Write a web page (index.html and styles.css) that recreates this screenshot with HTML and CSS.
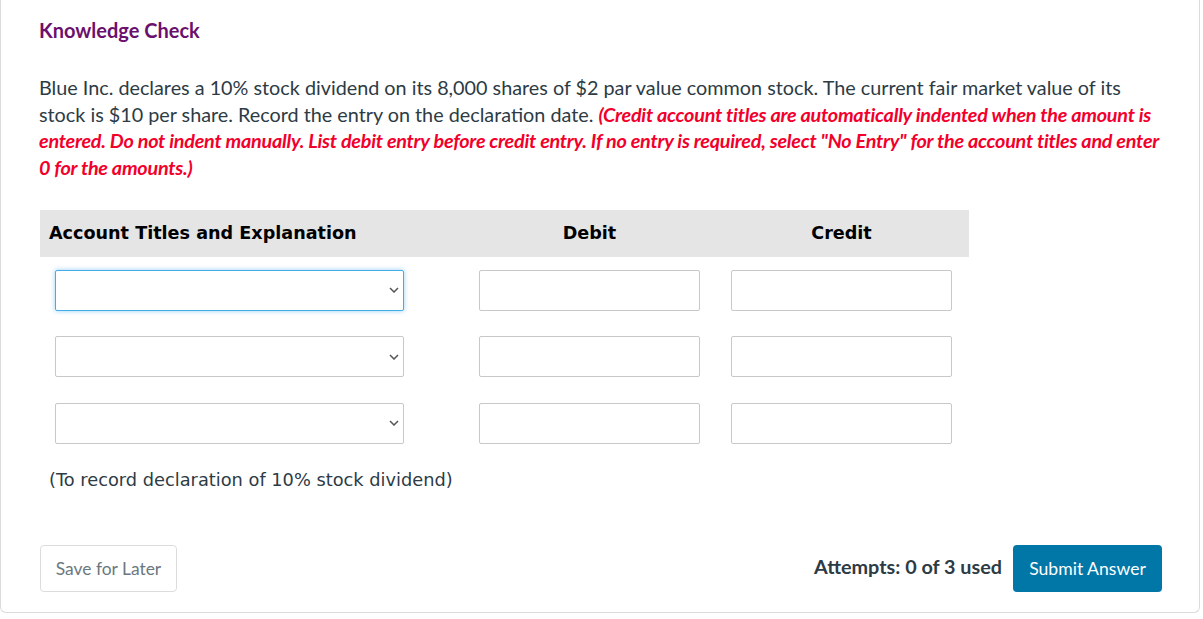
FILE: index.html
```html
<!DOCTYPE html>
<html>
<head>
<meta charset="utf-8">
<link rel="stylesheet" href="styles.css">
</head>
<body>
<div class="card">
  <h2 class="title">Knowledge Check</h2>
  <p class="question">Blue Inc. declares a 10% stock dividend on its 8,000 shares of $2 par value common stock. The current fair market value of its stock is $10 per share. Record the entry on the declaration date. <span class="hint">(Credit account titles are automatically indented when the amount is entered. Do not indent manually. List debit entry before credit entry. If no entry is required, select "No Entry" for the account titles and enter 0 for the amounts.)</span></p>

  <div class="journal">
    <div class="jhead">
      <div class="c1">Account Titles and Explanation</div>
      <div class="c2">Debit</div>
      <div class="c3">Credit</div>
    </div>
    <div class="jrow">
      <div class="c1"><div class="sel focus"><svg class="chev" width="10" height="6" viewBox="0 0 10 6"><path d="M1 1 L5 5 L9 1" fill="none" stroke="#555" stroke-width="1.5"/></svg></div></div>
      <div class="c2"><div class="amt"></div></div>
      <div class="c3"><div class="amt"></div></div>
    </div>
    <div class="jrow">
      <div class="c1"><div class="sel"><svg class="chev" width="10" height="6" viewBox="0 0 10 6"><path d="M1 1 L5 5 L9 1" fill="none" stroke="#555" stroke-width="1.5"/></svg></div></div>
      <div class="c2"><div class="amt"></div></div>
      <div class="c3"><div class="amt"></div></div>
    </div>
    <div class="jrow">
      <div class="c1"><div class="sel"><svg class="chev" width="10" height="6" viewBox="0 0 10 6"><path d="M1 1 L5 5 L9 1" fill="none" stroke="#555" stroke-width="1.5"/></svg></div></div>
      <div class="c2"><div class="amt"></div></div>
      <div class="c3"><div class="amt"></div></div>
    </div>
    <div class="note">(To record declaration of 10% stock dividend)</div>
  </div>

  <div class="footer">
    <button class="btn-save">Save for Later</button>
    <div class="right">
      <span class="attempts">Attempts: 0 of 3 used</span>
      <button class="btn-submit">Submit Answer</button>
    </div>
  </div>
</div>
</body>
</html>
```
FILE: styles.css
```css
html, body {
  margin: 0;
  padding: 0;
  background: #fff;
}
.card {
  width: 1200px;
  box-sizing: border-box;
  border: 1px solid #dcdcdc;
  border-top: none;
  border-radius: 0 0 6px 6px;
  padding: 18px 37px 20px 38px;
  font-family: Lato, "Open Sans", sans-serif;
  color: #2d3b45;
}
.title {
  margin: 0;
  font-size: 20px;
  font-weight: 700;
  line-height: 24px;
  color: #6b106d;
}
.question {
  margin: 32px 0 0 0;
  font-size: 19.8px;
  line-height: 26.7px;
  max-width: 1124px;
}
.hint {
  color: #f2002b;
  font-weight: 700;
  font-style: italic;
  letter-spacing: -0.24px;
}
.journal {
  margin-top: 29px;
  margin-left: 1px;
  width: 929px;
  font-family: "DejaVu Sans", Verdana, sans-serif;
}
.jhead {
  display: grid;
  grid-template-columns: 425px 249px 255px;
  background: #e5e5e5;
  height: 47px;
  align-items: center;
  font-weight: 700;
  font-size: 17.6px;
  color: #000;
}
.jhead .c1 { padding-left: 9px; }
.jhead .c2, .jhead .c3 { text-align: center; }
.jrow {
  display: grid;
  grid-template-columns: 425px 249px 255px;
  align-items: center;
  height: 41px;
  margin-top: 25.5px;
}
.jhead + .jrow { margin-top: 13px; }
.jrow .c1 { padding-left: 15px; }
.jrow .c2, .jrow .c3 { display: flex; justify-content: center; }
.sel {
  width: 349px;
  height: 41px;
  box-sizing: border-box;
  border: 1px solid #c8c8c8;
  border-radius: 2px;
  background: #fff;
  display: flex;
  align-items: center;
  justify-content: flex-end;
  padding-right: 4px;
}
.sel.focus {
  border-color: #45acea;
  box-shadow: 0 0 5px rgba(70, 170, 235, 0.55);
}
.chev { display: block; }
.amt {
  width: 221px;
  height: 41px;
  box-sizing: border-box;
  border: 1px solid #c8c8c8;
  border-radius: 2px;
  background: #fff;
}
.note {
  margin-top: 24px;
  padding-left: 9px;
  font-size: 17.8px;
  color: #2d3b45;
  line-height: 24px;
}
.footer {
  margin-top: 53px;
  margin-left: 1px;
  display: flex;
  justify-content: space-between;
  align-items: center;
}
.btn-save {
  font-family: Lato, sans-serif;
  font-size: 17.4px;
  color: #6b7780;
  background: #fff;
  border: 1px solid #dcdcdc;
  border-radius: 4px;
  height: 47px;
  width: 137px;
  padding: 0;
}
.right {
  display: flex;
  align-items: center;
  gap: 11px;
}
.attempts {
  font-size: 19.8px;
  font-weight: 700;
  color: #2d3b45;
  margin-bottom: 4px;
}
.btn-submit {
  font-family: Lato, sans-serif;
  font-size: 17.6px;
  color: #fff;
  background: #0177a8;
  border: none;
  border-radius: 4px;
  height: 47px;
  width: 149px;
  padding: 0;
}
```
